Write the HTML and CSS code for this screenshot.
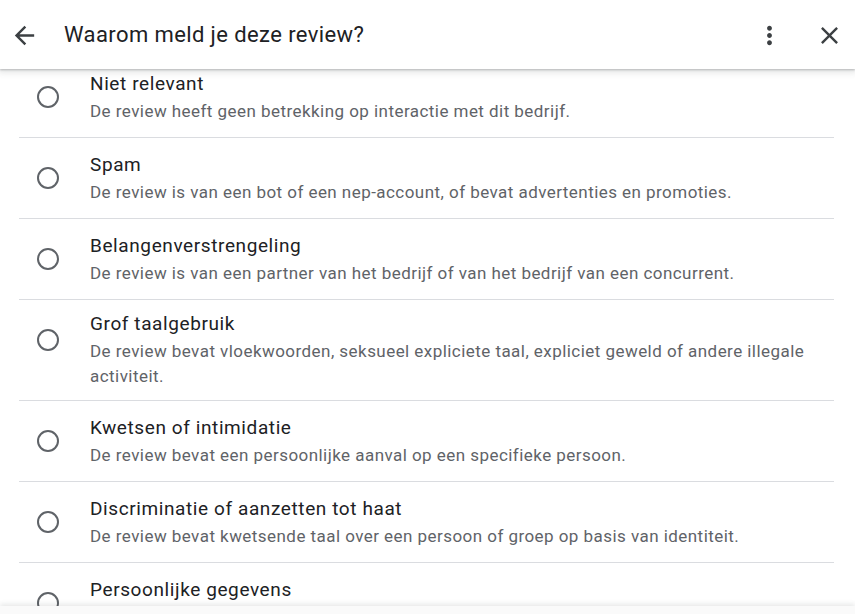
FILE: index.html
```html
<!DOCTYPE html>
<html lang="nl">
<head>
<meta charset="utf-8">
<title>Waarom meld je deze review?</title>
<link rel="stylesheet" href="styles.css">
</head>
<body>
<div class="page">
  <header class="topbar">
    <button class="icon-btn back" aria-label="Terug">
      <svg viewBox="0 0 24 24" width="29" height="29"><path d="M20 11H7.83l5.59-5.59L12 4l-8 8 8 8 1.41-1.41L7.83 13H20v-2z"/></svg>
    </button>
    <h1 class="title">Waarom meld je deze review?</h1>
    <button class="icon-btn more" aria-label="Meer">
      <svg viewBox="0 0 24 24" width="29" height="29"><path d="M12 8c1.1 0 2-.9 2-2s-.9-2-2-2-2 .9-2 2 .9 2 2 2zm0 2c-1.1 0-2 .9-2 2s.9 2 2 2 2-.9 2-2-.9-2-2-2zm0 6c-1.1 0-2 .9-2 2s.9 2 2 2 2-.9 2-2-.9-2-2-2z"/></svg>
    </button>
    <button class="icon-btn close" aria-label="Sluiten">
      <svg viewBox="0 0 24 24" width="29" height="29"><path d="M19 6.41L17.59 5 12 10.59 6.41 5 5 6.41 10.59 12 5 17.59 6.41 19 12 13.41 17.59 19 19 17.59 13.41 12z"/></svg>
    </button>
  </header>
  <main class="scroller">
    <ul class="options">
      <li class="option">
        <span class="radio"></span>
        <div class="text">
          <div class="opt-title">Niet relevant</div>
          <div class="opt-desc">De review heeft geen betrekking op interactie met dit bedrijf.</div>
        </div>
      </li>
      <li class="option">
        <span class="radio"></span>
        <div class="text">
          <div class="opt-title">Spam</div>
          <div class="opt-desc">De review is van een bot of een nep-account, of bevat advertenties en promoties.</div>
        </div>
      </li>
      <li class="option">
        <span class="radio"></span>
        <div class="text">
          <div class="opt-title">Belangenverstrengeling</div>
          <div class="opt-desc">De review is van een partner van het bedrijf of van het bedrijf van een concurrent.</div>
        </div>
      </li>
      <li class="option">
        <span class="radio"></span>
        <div class="text">
          <div class="opt-title">Grof taalgebruik</div>
          <div class="opt-desc">De review bevat vloekwoorden, seksueel expliciete taal, expliciet geweld of andere illegale activiteit.</div>
        </div>
      </li>
      <li class="option">
        <span class="radio"></span>
        <div class="text">
          <div class="opt-title">Kwetsen of intimidatie</div>
          <div class="opt-desc">De review bevat een persoonlijke aanval op een specifieke persoon.</div>
        </div>
      </li>
      <li class="option">
        <span class="radio"></span>
        <div class="text">
          <div class="opt-title">Discriminatie of aanzetten tot haat</div>
          <div class="opt-desc">De review bevat kwetsende taal over een persoon of groep op basis van identiteit.</div>
        </div>
      </li>
      <li class="option last">
        <span class="radio"></span>
        <div class="text">
          <div class="opt-title">Persoonlijke gegevens</div>
        </div>
      </li>
    </ul>
  </main>
  <footer class="bottombar"></footer>
</div>
</body>
</html>
```

FILE: styles.css
```css
* { box-sizing: border-box; }

html, body {
  margin: 0;
  padding: 0;
  background: #fff;
}

body {
  font-family: Roboto, "Liberation Sans", Arial, sans-serif;
  color: #202124;
}

.page {
  display: flex;
  flex-direction: column;
  height: 614px;
  overflow: hidden;
}

.topbar {
  position: relative;
  z-index: 2;
  flex: 0 0 69px;
  height: 69px;
  display: flex;
  align-items: center;
  padding: 1px 11px 0 10px;
  background: #fff;
  box-shadow: 0 1px 2px rgba(60, 64, 67, 0.3), 0 2px 6px 2px rgba(60, 64, 67, 0.12);
}

.icon-btn {
  display: flex;
  align-items: center;
  justify-content: center;
  width: 29px;
  height: 29px;
  padding: 0;
  border: 0;
  background: none;
  fill: #3c4043;
}

.title {
  flex: 1;
  margin: 0 0 0 25px;
  font-size: 22px;
  font-weight: 400;
  line-height: 28px;
  letter-spacing: 0.4px;
  color: #202124;
}

.more { margin-right: 31px; }

.scroller {
  flex: 1;
  overflow: hidden;
  position: relative;
  z-index: 1;
}

.options {
  list-style: none;
  margin: -12px 0 0;
  padding: 0 21px 0 19px;
}

.option {
  display: flex;
  align-items: center;
  min-height: 81px;
  padding: 11px 0;
  border-bottom: 1px solid #dadce0;
}

.option.last {
  align-items: flex-start;
  padding-top: 14px;
}

.radio {
  flex: 0 0 22px;
  align-self: flex-start;
  width: 22px;
  height: 22px;
  margin: 18px 0 0 18px;
  border: 2px solid #5f6368;
  border-radius: 50%;
}

.option.last .radio { margin-top: 15px; }

.text {
  flex: 1;
  margin-left: 31px;
}

.opt-title {
  font-size: 19px;
  line-height: 26px;
  letter-spacing: 0.6px;
  color: #202124;
}

.opt-desc {
  margin-top: 2px;
  font-size: 17px;
  line-height: 25px;
  letter-spacing: 0.45px;
  color: #5f6368;
}

.bottombar {
  position: relative;
  z-index: 2;
  flex: 0 0 8px;
  background: #fafafa;
  box-shadow: 0 -2px 5px rgba(60, 64, 67, 0.12);
}
```
